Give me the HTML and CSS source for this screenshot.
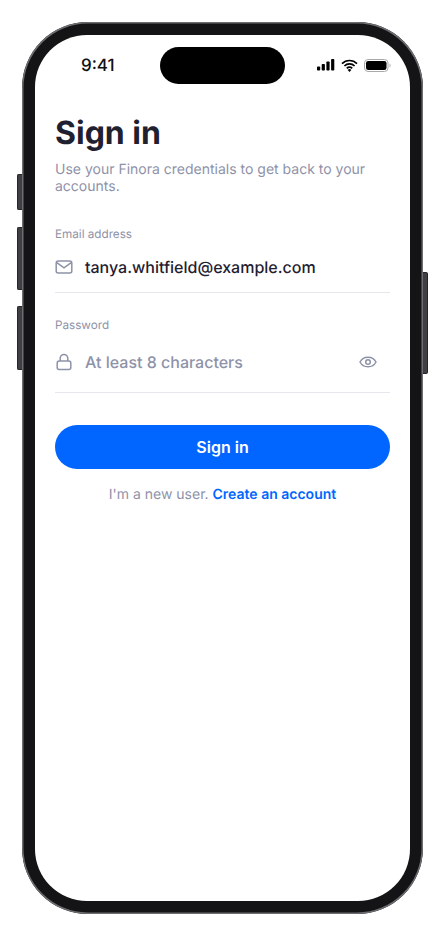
FILE: index.html
```html
<!DOCTYPE html>
<html lang="en">
<head>
<meta charset="utf-8">
<title>Sign in</title>
<link rel="stylesheet" href="styles.css">
</head>
<body>
<div class="phone">
  <span class="side side-mute"></span>
  <span class="side side-up"></span>
  <span class="side side-down"></span>
  <span class="side side-power"></span>
  <div class="screen">
    <div class="island"></div>
    <div class="status">
      <span class="time">9:41</span>
      <span class="status-icons">
        <svg width="18" height="12" viewBox="0 0 18 12"><rect x="0" y="7.500" width="3.200" height="4" rx=".8"/><rect x="4.700" y="5" width="3.200" height="6.500" rx=".8"/><rect x="9.400" y="2.500" width="3.200" height="9" rx=".8"/><rect x="14.100" y="0" width="3.200" height="11.500" rx=".8"/></svg>
        <svg width="17" height="13" viewBox="0 0 17 13"><path d="M1 4.600a10.600 10.600 0 0 1 15 0M3.400 7a7.200 7.200 0 0 1 10.200 0M5.800 9.300a3.800 3.800 0 0 1 5.400 0" fill="none" stroke="#000" stroke-width="1.700"/><path d="M8.500 13 6.700 10.900a2.500 2.500 0 0 1 3.600 0z"/></svg>
        <svg width="27" height="13" viewBox="0 0 27 13"><rect x=".5" y=".5" width="23.500" height="12" rx="3.500" fill="none" stroke="#a9a9ab"/><rect x="2" y="2" width="20.500" height="9" rx="2.200"/><path d="M25.400 4.500c.9.300 1.400 1.100 1.400 2s-.5 1.700-1.400 2z" fill="#c4c4c6"/></svg>
      </span>
    </div>
    <main class="content">
      <h1 class="title">Sign in</h1>
      <p class="subtitle">Use your Finora credentials to get back to your accounts.</p>
      <div class="field field-email">
        <label class="label">Email address</label>
        <div class="row row-email">
          <svg class="icon" width="18" height="18" viewBox="0 0 18 18"><rect x="1.200" y="2.900" width="15.600" height="12.200" rx="2" fill="none" stroke="#8e92a8" stroke-width="1.500"/><path d="m1.800 4.600 7.200 5.200 7.200-5.200" fill="none" stroke="#8e92a8" stroke-width="1.500"/></svg>
          <span class="value">tanya.whitfield@example.com</span>
        </div>
      </div>
      <div class="field field-password">
        <label class="label">Password</label>
        <div class="row row-password">
          <svg class="icon" width="18" height="18" viewBox="0 0 18 18"><rect x="2.200" y="8" width="13.600" height="8.600" rx="2" fill="none" stroke="#8e92a8" stroke-width="1.500"/><path d="M5.200 8V5.200a3.800 3.800 0 0 1 7.600 0V8" fill="none" stroke="#8e92a8" stroke-width="1.500"/></svg>
          <span class="placeholder">At least 8 characters</span>
          <svg class="eye" width="18" height="18" viewBox="0 0 18 18"><path d="M1 9c1.700-3.200 4.500-4.800 8-4.800s6.300 1.600 8 4.800c-1.700 3.200-4.500 4.800-8 4.800S2.700 12.200 1 9z" fill="none" stroke="#8e92a8" stroke-width="1.500"/><circle cx="9" cy="9" r="2.300" fill="none" stroke="#8e92a8" stroke-width="1.500"/></svg>
        </div>
      </div>
      <button class="submit" type="button">Sign in</button>
      <p class="signup">I'm a new user. <a class="signup-link">Create an account</a></p>
    </main>
  </div>
</div>
</body>
</html>
```
FILE: styles.css
```css
* { box-sizing: border-box; }
html, body { margin: 0; background: #fff; }
body {
  width: 445px;
  height: 936px;
  padding: 22px 0 0 22px;
  overflow: hidden;
  font-family: Inter, "Liberation Sans", sans-serif;
  text-rendering: geometricPrecision;
}
.phone {
  position: relative;
  width: 401px;
  height: 892px;
  padding: 13px;
  border-radius: 66px;
  background: #141416;
  box-shadow: inset 0 0 0 1.500px #6e6e72;
}
.side {
  position: absolute;
  width: 5px;
  background: #3f3f44;
  border: 1px solid #26262a;
}
.side-mute, .side-up, .side-down { left: -5px; border-right: 0; border-radius: 2px 0 0 2px; }
.side-mute { top: 152px; height: 36px; }
.side-up { top: 205px; height: 63px; }
.side-down { top: 284px; height: 64px; }
.side-power { right: -5px; top: 250px; height: 102px; border-left: 0; border-radius: 0 2px 2px 0; }
.screen {
  position: relative;
  width: 375px;
  height: 866px;
  border-radius: 52px;
  background: #fff;
  overflow: hidden;
}
.island {
  position: absolute;
  left: 125px;
  top: 12px;
  width: 125px;
  height: 37px;
  border-radius: 19px;
  background: #000;
}
.status {
  display: flex;
  justify-content: space-between;
  align-items: center;
  height: 60px;
  padding: 0 19px 0 46px;
}
.time {
  margin-top: 2px;
  font-size: 17px;
  font-weight: 500;
  color: #111;
}
.status-icons { display: flex; align-items: center; gap: 6px; }
.status-icons svg { display: block; }
.content { padding: 18px 20px 0; }
.title {
  margin: 0;
  font-size: 32px;
  line-height: 40px;
  font-weight: 700;
  color: #1f2030;
}
.subtitle {
  margin: 8px 0 0;
  font-size: 14px;
  line-height: 17px;
  color: #8e92a8;
}
.field { border-bottom: 1px solid #e6e6ef; }
.field-email { margin-top: 31px; }
.field-password { margin-top: 24px; }
.label {
  display: block;
  font-size: 11.700px;
  line-height: 16px;
  color: #8e92a8;
}
.row { display: flex; align-items: center; gap: 12px; }
.row-email { height: 50px; }
.row-password { height: 59px; padding: 0 13px 1px 0; }
.icon { flex: none; }
.value {
  font-size: 16px;
  font-weight: 500;
  color: #1f2030;
}
.placeholder {
  flex: 1;
  font-size: 16px;
  font-weight: 500;
  color: #8e92a8;
}
.eye { flex: none; }
.submit {
  display: block;
  width: 100%;
  height: 44px;
  margin-top: 32px;
  border: 0;
  border-radius: 22px;
  background: #0066ff;
  color: #fff;
  font-family: inherit;
  font-size: 16px;
  font-weight: 600;
}
.signup {
  margin: 17px 0 0;
  text-align: center;
  font-size: 14px;
  line-height: 18px;
  color: #8e92a8;
}
.signup-link { color: #0066ff; font-weight: 600; }
```
